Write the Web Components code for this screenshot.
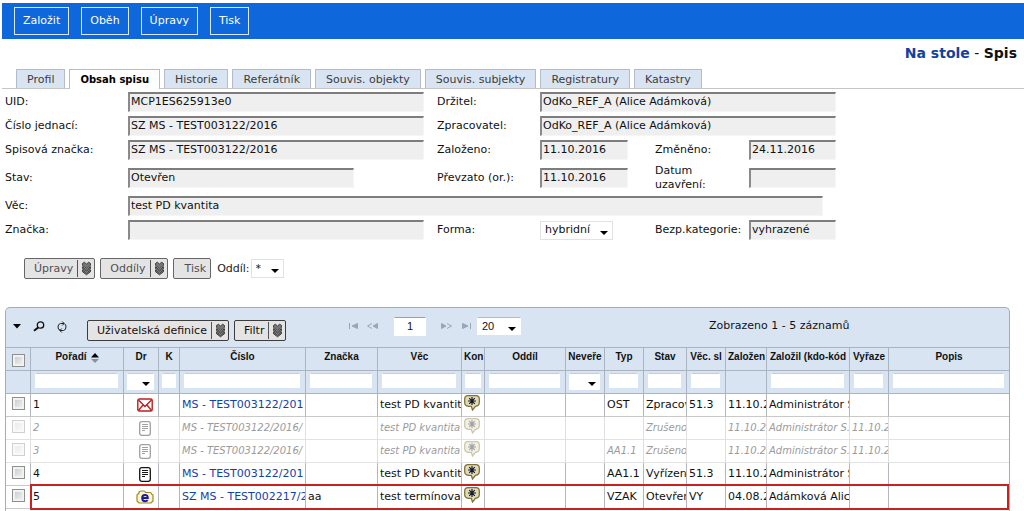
<!DOCTYPE html>
<html lang="cs">
<head>
<meta charset="utf-8">
<title>Na stole - Spis</title>
<style>
  body { margin: 0; background: #fff; color: #111; font: 11px/14px "DejaVu Sans", Verdana, sans-serif; }
</style>
</head>
<body>
<menu-bar></menu-bar>
<page-title><a slot="place" href="#stul">Na stole</a><span slot="name">Spis</span></page-title>
<tab-strip active="1" tabs="Profil|Obsah spisu|Historie|Referátník|Souvis. objekty|Souvis. subjekty|Registratury|Katastry"></tab-strip>
<record-form></record-form>
<section-tools></section-tools>
<records-grid></records-grid>

<script>
const ARROW = `url("data:image/svg+xml,%3Csvg xmlns='http://www.w3.org/2000/svg' width='8' height='4'%3E%3Cpath d='M0 0h8L4 4z' fill='%23000'/%3E%3C/svg%3E")`;
const BASE = `
  *, *::before, *::after { box-sizing: border-box; }
  input, select, button { font: inherit; color: inherit; margin: 0; border-radius: 0; }
  select { appearance: none; border: 1px solid #e2e2e2; background: #fff ${ARROW} no-repeat right 4px top 9px; padding: 0 14px 0 4px; }
`;
function define(name, css, html) {
  customElements.define(name, class extends HTMLElement {
    connectedCallback() {
      if (this.shadowRoot) return;
      const root = this.attachShadow({ mode: 'open' });
      root.innerHTML = `<style>${BASE}${css}</style>` + (typeof html === 'function' ? html(this) : html);
    }
  });
}

define('menu-bar', `
  :host { display: block; margin: 3px 0 0 2px; background: #0f67dc; }
  nav { display: flex; gap: 12px; padding: 4px 12px; }
  button { height: 28px; padding: 0 8px; background: none; border: 1px solid #d8e8ff; color: #fff; line-height: 24px; }
`, `<nav><button>Založit</button><button>Oběh</button><button>Úpravy</button><button>Tisk</button></nav>`);

define('page-title', `
  :host { display: block; padding: 0 7px 2px; text-align: right; font-size: 14px; line-height: 28px; }
  h1 { margin: 0; font: inherit; }
  ::slotted(*) { font-weight: bold; }
  ::slotted(a) { color: #14409f; text-decoration: none; }
`, `<h1><slot name="place"></slot> - <slot name="name"></slot></h1>`);

define('tab-strip', `
  :host { display: block; margin-left: 2px; border-bottom: 1px solid #c6c6c6; }
  nav { display: flex; gap: 4px; padding-left: 14px; }
  a { height: 19px; padding: 0 10px; border: 1px solid #b3bccb; border-bottom: 0; background: #d9e4f3; color: #3c3c3c; line-height: 19px; text-decoration: none; white-space: nowrap; }
  a[aria-current] { height: 20px; margin-bottom: -1px; background: #fff; color: #000; font-weight: bold; font-size: 10px; }
`, el => `<nav>${el.getAttribute('tabs').split('|').map((t, i) =>
  `<a href="#t${i}"${i == el.getAttribute('active') ? ' aria-current="page"' : ''}>${t}</a>`).join('')}</nav>`);

define('record-form', `
  :host { display: block; padding: 1px 0 0 5px; }
  form { display: grid; grid-template-columns: 123px 309fr 103px 115fr 94px 87fr 188fr; grid-template-rows: 24px 24px 24px 32px 24px 24px; align-items: center; }
  input { height: 20px; min-width: 0; padding: 0 1px 2px; background: #efefef; border: solid; border-width: 2px 1px 1px 2px; border-color: #7d7d7d #f6f6f6 #f6f6f6 #8a8a8a; outline: 0; }
  .c1 { grid-column: 1; } .c3 { grid-column: 3; } .c5 { grid-column: 5; }
  .main { grid-column: 2; margin-right: 13px; }
  .short { width: 226px; }
  .pair { grid-column: 4 / 7; }
  .date { grid-column: 4; margin-right: 27px; }
  .last { grid-column: 6; }
  .wide { grid-column: 2 / 7; margin-right: 13px; }
  select { grid-column: 4; justify-self: start; width: 73px; height: 19px; }
`, `<form>
  <label class="c1" for="uid">UID:</label><input class="main" id="uid" readonly value="MCP1ES625913e0">
  <label class="c3" for="drz">Držitel:</label><input class="pair" id="drz" readonly value="OdKo_REF_A (Alice Adámková)">
  <label class="c1" for="cj">Číslo jednací:</label><input class="main" id="cj" readonly value="SZ MS - TEST003122/2016">
  <label class="c3" for="zpr">Zpracovatel:</label><input class="pair" id="zpr" readonly value="OdKo_REF_A (Alice Adámková)">
  <label class="c1" for="sz">Spisová značka:</label><input class="main" id="sz" readonly value="SZ MS - TEST003122/2016">
  <label class="c3" for="zal">Založeno:</label><input class="date" id="zal" readonly value="11.10.2016">
  <label class="c5" for="zme">Změněno:</label><input class="last" id="zme" readonly value="24.11.2016">
  <label class="c1" for="stav">Stav:</label><input class="main short" id="stav" readonly value="Otevřen">
  <label class="c3" for="pre">Převzato (or.):</label><input class="date" id="pre" readonly value="11.10.2016">
  <label class="c5" for="uza">Datum<br>uzavření:</label><input class="last" id="uza" readonly>
  <label class="c1" for="vec">Věc:</label><input class="wide" id="vec" readonly value="test PD kvantita">
  <label class="c1" for="zna">Značka:</label><input class="main" id="zna" readonly>
  <label class="c3" for="forma">Forma:</label><select id="forma"><option>hybridní</option></select>
  <label class="c5" for="bez">Bezp.kategorie:</label><input class="last" id="bez" readonly value="vyhrazené">
</form>`);

define('tool-button', `
  :host { display: inline-flex; color: #111; }
  :host([muted]) { color: #505050; }
  button { display: flex; align-items: center; height: 21px; padding: 0 4px 0 11px; background: #e5e4e4; border: 1px solid #3c3c3c; border-radius: 2px; white-space: nowrap; }
  :host([muted]) button { border-color: #666; }
  :host([menu]) button { padding: 0 3px 0 9px; }
  svg { display: none; width: 14px; height: 17px; margin-left: 4px; border-left: 1px solid #555; padding-left: 4px; }
  :host([menu]) svg { display: block; }
`, `<button><slot></slot><svg viewBox="0 0 10 18"><g fill="#777" stroke="#333" stroke-width="1"><path d="M.5 3.500L2.500 2 5 4l2.500-2 2 1.500v2L5 9 .5 5.500z"/><path d="M.5 7L5 10.500 9.500 7v2L5 12.500.5 9z"/><path d="M.5 10.500L5 14l4.500-3.500v2L5 16 .5 12.500z"/></g></svg></button>`);

define('section-tools', `
  :host { display: flex; align-items: center; gap: 5px; height: 21px; margin: 16px 0 0 24px; }
  div { display: flex; align-items: center; gap: 1px; margin-left: 1px; }
  label { color: #222; }
  select { width: 33px; height: 19px; }
`, `<tool-button muted menu>Úpravy</tool-button><tool-button muted menu>Oddíly</tool-button><tool-button muted>Tisk</tool-button>
<div><label for="oddil">Oddíl:</label><select id="oddil"><option>*</option></select></div>`);

const ICONS = {
  mail: `<svg width="16" height="14" viewBox="0 0 16 14" fill="none" stroke="#b92020" stroke-width="1.400"><rect x=".8" y="1" width="14.400" height="12" rx="1.500"/><path d="M1.500 2L8 8.500 14.500 2M1.500 12.500L6 7M14.500 12.500L10 7"/></svg>`,
  doc: `<svg width="12" height="15" viewBox="0 0 12 15" fill="none" stroke="#151515" stroke-width="1.300"><rect x=".7" y=".7" width="10.600" height="13.600" rx="2"/><path d="M3 3.500h6M3 5.500h6M3 7.500h6M3 9.500h3" stroke-width="1"/></svg>`,
  folder: `<svg width="18" height="14" viewBox="0 0 18 14"><path d="M3 3Q3 1 5 1h3q1 0 1.500 1.500H14q1.500 0 1.500 1.500L17 5v6l-2 2H3l-2-2V5z" fill="#fbf5c9" stroke="#9c8a22" stroke-width="1.200"/><path d="M6.200 8h5.600Q11.800 4.900 9 4.900T6.200 8q0 3.200 3 3.200 1.600 0 2.500-1" fill="none" stroke="#1c1ca8" stroke-width="2"/></svg>`,
  note: `<svg width="16" height="16" viewBox="0 0 16 16"><path d="M4 .7h8Q15.300.7 15.300 4v3.500q0 3.300-3.800 3.800L8.500 15l-1.200-3.700H4.500Q.7 10.800.7 7.500V4Q.7.7 4 .7z" fill="#e2dcb4" stroke="#7d733c" stroke-width="1.300"/><path d="M8 2v8M4 6h8M5.200 3.200l5.600 5.600M10.800 3.200L5.200 8.800" stroke="#151a33" stroke-width="1.200"/></svg>`
};
const COLS = [['Pořadí', 93, 't'], ['Dr', 35, 's'], ['K', 21, 't'], ['Číslo', 126, 't'], ['Značka', 72, 't'], ['Věc', 84, 't'], ['Kon', 23, 't'], ['Oddíl', 81, 't'],
  ['Neveře', 39, 's'], ['Typ', 39, 't'], ['Stav', 43, 't'], ['Věc. sl', 39, 't'], ['Založen', 41, ''], ['Založil (kdo-kód', 83, 't'], ['Vyřaze', 39, 't'], ['Popis', 0, 't']];
const ROWS = [
  { c: ['1', 'mail', '', 'MS - TEST003122/201', '', 'test PD kvantit', 'note', '', '', 'OST', 'Zpracov', '51.3', '11.10.2', 'Administrátor S', '', ''] },
  { off: 1, c: ['2', 'doc', '', 'MS - TEST003122/2016/', '', 'test PD kvantita', 'note', '', '', '', 'Zrušeno', '', '11.10.2', 'Administrátor S.', '11.10.2', ''] },
  { off: 1, c: ['3', 'doc', '', 'MS - TEST003122/2016/', '', 'test PD kvantita', 'note', '', '', 'AA1.1', 'Zrušeno', '', '11.10.2', 'Administrátor S.', '11.10.2', ''] },
  { c: ['4', 'doc', '', 'MS - TEST003122/201', '', 'test PD kvantit', 'note', '', '', 'AA1.1', 'Vyřízen', '51.3', '11.10.2', 'Administrátor S', '', ''] },
  { mark: 1, c: ['5', 'folder', '', 'SZ MS - TEST002217/2', 'aa', 'test termínova', 'note', '', '', 'VZAK', 'Otevřen', 'VY', '04.08.2', 'Adámková Alic', '', ''] }
];
const cell = (v, i) => ICONS[v] ? `<td class="${v}">${ICONS[v]}</td>` : `<td>${i === 3 ? `<a href="#spis">${v}</a>` : v}</td>`;

define('grid-pager', `
  :host { display: flex; align-items: center; font-family: "Liberation Sans", Arial, sans-serif; }
  button { display: flex; padding: 0; border: 0; background: none; }
  svg { width: 11px; height: 8px; fill: #98a6ba; stroke: #98a6ba; }
  .nav { display: flex; gap: 8px; }
  .go { gap: 9px; }
  .page { width: 32px; height: 19px; margin: 0 15px 0 16px; border: 1px solid #fff; border-top-color: #98a2ae; text-align: center; padding: 0; }
  select { width: 44px; height: 18px; margin-left: 5px; border-color: #fff; border-top-color: #b3bac4; }
`, `<div class="nav"><button aria-label="První"><svg viewBox="0 0 11 8"><path d="M1.500 1v6" fill="none"/><path d="M9.500 1.500v5L4 4z"/></svg></button>
<button aria-label="Předchozí"><svg viewBox="0 0 11 8"><path d="M5 1.500L.5 4 5 6.500" fill="none"/><path d="M10.500 1.500v5L6 4z"/></svg></button></div>
<input class="page" aria-label="Strana" value="1">
<div class="nav go"><button aria-label="Další"><svg viewBox="0 0 11 8"><path d="M.5 1.500v5L5 4z"/><path d="M6 1.500L10.500 4 6 6.500" fill="none"/></svg></button>
<button aria-label="Poslední"><svg viewBox="0 0 11 8"><path d="M1.500 1.500v5L7 4z"/><path d="M9.500 1v6" fill="none"/></svg></button></div>
<select aria-label="Záznamů na stranu"><option>20</option></select>`);

define('records-grid', `
  :host { display: block; margin: 28px 14px 0 5px; border: 1px solid #a5acb6; border-bottom: 0; border-radius: 5px 5px 0 0; padding-bottom: 2px; background: linear-gradient(#d9e4f3 40px, #fff 40px); }
  .bar { display: grid; grid-template-columns: 342fr 361fr 300fr; height: 40px; border-bottom: 1px solid #a9b3c1; }
  .left { display: flex; align-items: center; gap: 5px; padding: 6px 0 0 7px; }
  .left .icon { display: flex; margin: -8px 7px 0 0; padding: 0; border: 0; background: none; }
  .left .gap { margin-right: 15px; }
  grid-pager { height: 36px; }
  .count { line-height: 35px; white-space: nowrap; }
  table { width: 100%; table-layout: fixed; border-collapse: separate; border-spacing: 0; }
  th, td { height: 23px; padding: 0 0 0 2px; border-right: 1px solid #a9b3c1; border-bottom: 1px solid #a9b3c1; overflow: hidden; white-space: nowrap; line-height: 14px; }
  tr > :last-child { border-right: 0; }
  thead { background: #d9e4f3; }
  th { font: bold 10px/12px "Liberation Sans", Arial, sans-serif; padding: 0 2px 4px; }
  th:first-child { padding: 3px 0 0; }
  .filter td { padding: 0 5px 4px 4px; vertical-align: middle; }
  .filter .thin { padding: 0 3px 4px; }
  .filter input, .filter select { display: block; width: 100%; height: 15px; border: 1px solid #fff; border-top-color: #c3ccd8; background-color: #fff; padding: 0; }
  .filter select { height: 17px; background-position: right 3px top 8px; }
  .filter td.sel { padding: 0 4px 2px 3px; }
  tbody td { border-right-color: #b3b7bd; border-bottom-color: #c9c9c9; }
  td:first-child { text-align: center; padding: 0; }
  input[type=checkbox] { appearance: none; display: block; width: 13px; height: 13px; margin: 0 auto 3px; border: 1px solid #8e8f8f; background: linear-gradient(135deg, #c4c8cc, #f4f4f4); box-shadow: inset 0 0 0 2px #f2f2f2; }
  th input[type=checkbox] { margin: 0 auto; }
  a { color: #1440a8; text-decoration: none; }
  svg { display: block; }
  .mail, .doc, .folder { padding: 0 0 0 8px; }
  .mail svg, .doc svg, .folder svg { margin: 0 auto; }
  td.note { padding: 0 0 4px 2px; }
  .off td { color: #9b9b9b; font-size: 10px; font-style: italic; border-bottom-color: #e2e2e2; border-right-color: #dfdfdf; }
  .off a { color: inherit; }
  .off svg, .off input { opacity: .4; }
  .sort { display: inline-block; margin-left: 4px; vertical-align: -3px; }
  .mark { position: relative; }
  .frame { position: absolute; inset: -2px 0 -1px 24px; border: 2px solid #c9211e; pointer-events: none; }
`, `<div class="bar">
  <div class="left">
    <button class="icon" aria-label="Nabídka"><svg width="8" height="5"><path d="M0 0h8L4 4.500z"/></svg></button>
    <button class="icon" aria-label="Hledat"><svg width="12" height="11" viewBox="0 0 12 11" fill="none" stroke="#111"><circle cx="7.500" cy="4" r="3.200" stroke-width="1.300"/><path d="M5.200 6.500L1 9.800" stroke-width="2"/></svg></button>
    <button class="icon gap" aria-label="Obnovit"><svg width="10" height="12" viewBox="0 0 10 12" fill="none" stroke="#222" stroke-width="1"><path d="M7 2.500H3.500Q1 3 1 6t2 3M3 9.500h3.500Q9 9 9 6T7.500 3M5.200.5l2 2-2 2M4.800 7.500l-2 2 2 2"/></svg></button>
    <tool-button menu>Uživatelská definice</tool-button><tool-button menu>Filtr</tool-button>
  </div>
  <grid-pager></grid-pager>
  <div class="count">Zobrazeno 1 - 5 záznamů</div>
</div>
<table>
<colgroup><col style="width:25px">${COLS.map(c => c[1] ? `<col style="width:${c[1]}px">` : '<col>').join('')}</colgroup>
<thead>
<tr><th><input type="checkbox" aria-label="Vybrat vše"></th>${COLS.map((c, i) => `<th>${c[0]}${i ? '' : '<svg class="sort" width="8" height="10"><path d="M0 4.500h8L4 0z"/><path d="M0 6h8L4 10z" fill="#8a8f98"/></svg>'}</th>`).join('')}</tr>
<tr class="filter"><td></td>${COLS.map(c => c[2] === 's' ? `<td class="sel"><select aria-label="Filtr ${c[0]}"><option></option></select></td>` : c[2] === 't' ? `<td${c[1] && c[1] < 25 ? ' class="thin"' : ''}><input aria-label="Filtr ${c[0]}"></td>` : '<td></td>').join('')}</tr>
</thead>
<tbody>${ROWS.map(r => `<tr class="${r.off ? 'off' : r.mark ? 'mark' : ''}"><td><input type="checkbox" aria-label="Vybrat ${r.c[0]}"${r.off ? ' disabled' : ''}>${r.mark ? '<span class="frame"></span>' : ''}</td>${r.c.map(cell).join('')}</tr>`).join('')}</tbody>
</table>`);
</script>
</body>
</html>
